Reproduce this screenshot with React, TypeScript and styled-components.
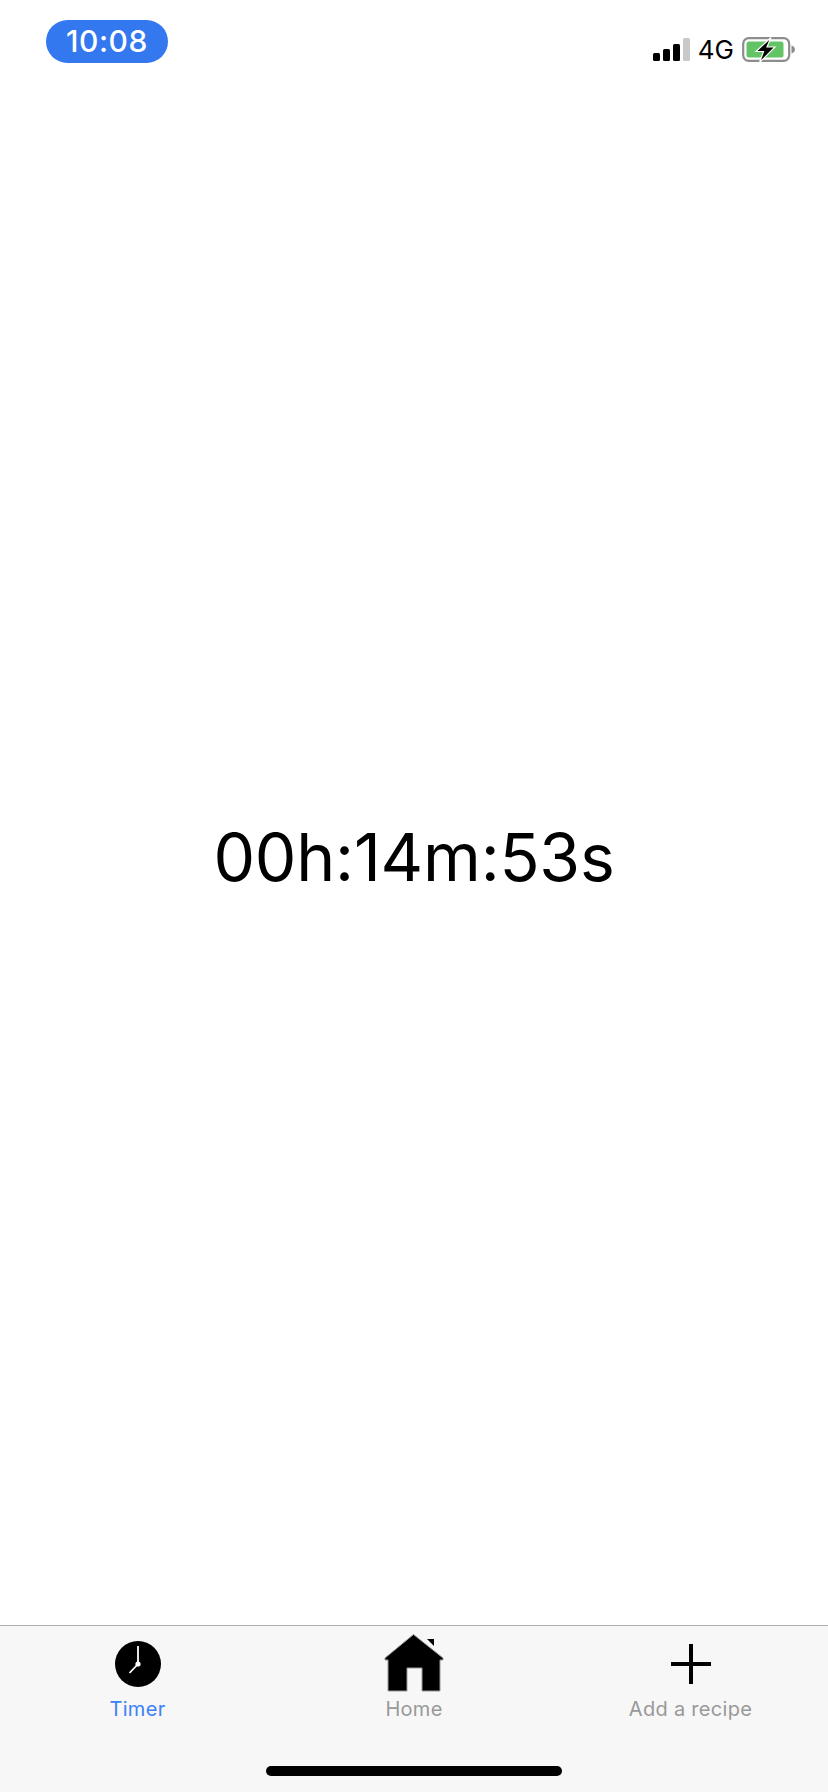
import React from "react";
import styled, { createGlobalStyle } from "styled-components";

const Global = createGlobalStyle`
  html, body { margin: 0; padding: 0; background: #fff; }
  body { font-family: Inter, "Liberation Sans", sans-serif; }
`;

const Screen = styled.div`
  width: 828px;
  height: 1792px;
  display: flex;
  flex-direction: column;
  overflow: hidden;
  background: #fff;
`;

const StatusBar = styled.header`
  height: 88px;
  flex: none;
  display: flex;
  justify-content: space-between;
  align-items: flex-start;
  padding: 20px 32px 0 46px;
  box-sizing: border-box;
`;

const TimePill = styled.div`
  width: 122px;
  height: 43px;
  border-radius: 21.5px;
  background: #3478f0;
  color: #fff;
  font-size: 30px;
  font-weight: 500;
  letter-spacing: 0.6px;
  line-height: 43px;
  text-align: center;
`;

const StatusIcons = styled.div`
  display: flex;
  align-items: center;
  margin-top: 15px;
  height: 30px;
`;

const Network = styled.span`
  font-size: 26px;
  font-weight: 400;
  color: #000;
  margin: 0 8px 0 8px;
  line-height: 30px;
`;

const Main = styled.main`
  flex: 1;
  display: flex;
  align-items: center;
  justify-content: center;
`;

const Countdown = styled.div`
  font-size: 66px;
  font-weight: 400;
  color: #000;
  line-height: 80px;
  letter-spacing: -0.2px;
`;

const TabBar = styled.nav`
  height: 167px;
  flex: none;
  box-sizing: border-box;
  border-top: 1px solid #b2b2b2;
  background: #f7f7f7;
  display: flex;
  flex-direction: column;
`;

const Tabs = styled.div`
  display: grid;
  grid-template-columns: 275px 278px 275px;
  height: 140px;
`;

const Tab = styled.div`
  display: flex;
  flex-direction: column;
  align-items: center;
`;

const IconSlot = styled.div`
  height: 71px;
  padding-top: 5px;
  box-sizing: border-box;
  display: flex;
  align-items: center;
  justify-content: center;
`;

const Label = styled.span<{ $active?: boolean }>`
  font-size: 20px;
  line-height: 24px;
  letter-spacing: 0.3px;
  color: ${(p) => (p.$active ? "#3b82f6" : "#999999")};
`;

const HomeIndicator = styled.div`
  width: 296px;
  height: 10px;
  border-radius: 5px;
  background: #000;
  align-self: center;
`;

const Signal = () => (
  <svg width="37" height="24" viewBox="0 0 37 24">
    <rect x="0" y="15" width="7" height="8" rx="1.5" fill="#000" />
    <rect x="10" y="11" width="7" height="12" rx="1.5" fill="#000" />
    <rect x="20" y="6" width="7" height="17" rx="1.5" fill="#000" />
    <rect x="30" y="0" width="7" height="23" rx="1.5" fill="#c9c9c9" />
  </svg>
);

const Battery = () => (
  <svg width="54" height="26" viewBox="0 0 54 26">
    <rect x="1.2" y="1.2" width="46" height="22.6" rx="5.5" fill="none" stroke="#8c8c8c" strokeWidth="2.2" />
    <rect x="4.5" y="4.5" width="37" height="16" rx="2.5" fill="#63c466" />
    <path d="M49.5 8.5 C52 9.5 53 11 53 12.5 C53 14 52 15.5 49.5 16.5 Z" fill="#8c8c8c" />
    <path d="M29 0.5 L14 14.5 H21.5 L17.5 25.5 L33 10 H25 Z" fill="#000" stroke="#fff" strokeWidth="1.2" strokeLinejoin="miter" />
  </svg>
);

const ClockIcon = () => (
  <svg width="46" height="46" viewBox="0 0 46 46">
    <circle cx="23" cy="23" r="23" fill="#000" />
    <path d="M23 5 V23" stroke="#fff" strokeWidth="1.8" fill="none" />
    <path d="M23 23 L14.5 32" stroke="#fff" strokeWidth="1.8" fill="none" />
    <circle cx="23" cy="23" r="2.6" fill="#fff" />
  </svg>
);

const HomeIcon = () => (
  <svg width="60" height="60" viewBox="0 0 60 60">
    <path
      d="M29.5 0.5 L1 24 V26 H4 V57 H23 V34 H38 V57 H56 V26 H59 V24 Z"
      fill="#000"
      stroke="#9a9a9a"
      strokeWidth="1"
    />
    <path d="M43 5 H50 V12 Z" fill="#000" />
  </svg>
);

const PlusIcon = () => (
  <svg width="40" height="40" viewBox="0 0 40 40">
    <path d="M20 0 V40 M0 20 H40" stroke="#000" strokeWidth="4" fill="none" />
  </svg>
);

export default function App() {
  return (
    <>
      <Global />
      <Screen>
        <StatusBar>
          <TimePill>10:08</TimePill>
          <StatusIcons>
            <Signal />
            <Network>4G</Network>
            <Battery />
          </StatusIcons>
        </StatusBar>
        <Main>
          <Countdown>00h:14m:53s</Countdown>
        </Main>
        <TabBar>
          <Tabs>
            <Tab>
              <IconSlot><ClockIcon /></IconSlot>
              <Label $active>Timer</Label>
            </Tab>
            <Tab>
              <IconSlot><HomeIcon /></IconSlot>
              <Label>Home</Label>
            </Tab>
            <Tab>
              <IconSlot><PlusIcon /></IconSlot>
              <Label>Add a recipe</Label>
            </Tab>
          </Tabs>
          <HomeIndicator />
        </TabBar>
      </Screen>
    </>
  );
}
